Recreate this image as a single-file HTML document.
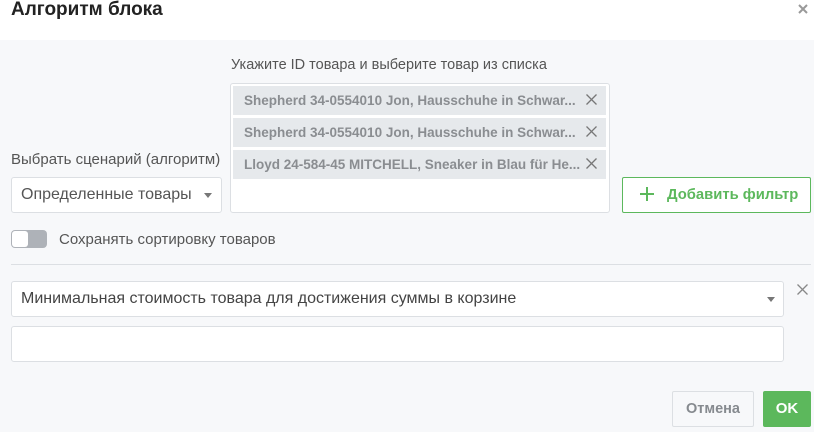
<!DOCTYPE html>
<html><head><meta charset="utf-8"><style>
*{box-sizing:border-box;margin:0;padding:0}
body{width:814px;height:432px;overflow:hidden;background:#f7f8fa;font-family:"Liberation Sans",sans-serif;position:relative;color:#333}
.a{position:absolute;white-space:nowrap}
.hdr{left:0;top:0;width:814px;height:40px;background:#fff}
.box{background:#fff;border:1px solid #dcdfe3;border-radius:3px}
.tag{left:233px;width:373px;height:29px;background:#e6e9ec;color:#8a8d91;font-weight:bold;font-size:13.5px;line-height:29px;padding-left:11px}
.tag svg{position:absolute;right:9px;top:8px}
.caret{width:0;height:0;border-left:4px solid transparent;border-right:4px solid transparent;border-top:5px solid #777}
</style></head><body>
<div class="a hdr"></div>
<div class="a" style="left:11px;top:0;font-size:19px;font-weight:bold;color:#222;line-height:19px">Алгоритм блока</div>
<svg class="a" style="left:798px;top:4px" width="10" height="10"><path d="M1 1L9 9M9 1L1 9" stroke="#999" stroke-width="2"/></svg>

<div class="a" style="left:231px;top:57px;font-size:14.5px;color:#555">Укажите ID товара и выберите товар из списка</div>
<div class="a box" style="left:230px;top:83px;width:380px;height:130px"></div>
<div class="a tag" style="top:86px">Shepherd 34-0554010 Jon, Hausschuhe in Schwar...<svg width="11" height="11"><path d="M0.5 0.5L10.5 10.5M10.5 0.5L0.5 10.5" stroke="#777" stroke-width="1.3"/></svg></div>
<div class="a tag" style="top:118px">Shepherd 34-0554010 Jon, Hausschuhe in Schwar...<svg width="11" height="11"><path d="M0.5 0.5L10.5 10.5M10.5 0.5L0.5 10.5" stroke="#777" stroke-width="1.3"/></svg></div>
<div class="a tag" style="top:150px">Lloyd 24-584-45 MITCHELL, Sneaker in Blau für He...<svg width="11" height="11"><path d="M0.5 0.5L10.5 10.5M10.5 0.5L0.5 10.5" stroke="#777" stroke-width="1.3"/></svg></div>

<div class="a" style="left:11px;top:151px;font-size:15px;color:#555">Выбрать сценарий (алгоритм)</div>
<div class="a box" style="left:11px;top:177px;width:211px;height:36px;font-size:16px;color:#555;line-height:34px;padding-left:9px">Определенные товары</div>
<div class="a caret" style="left:204px;top:193px"></div>

<div class="a" style="left:622px;top:177px;width:189px;height:36px;border:1px solid #5cb85c;border-radius:2px;background:#fff;color:#5cb85c;font-weight:bold;font-size:14.8px;line-height:34px;padding-left:44px">Добавить фильтр</div>
<div class="a" style="left:640px;top:193px;width:14px;height:2px;background:#5cb85c"></div>
<div class="a" style="left:646px;top:187px;width:2px;height:14px;background:#5cb85c"></div>

<div class="a" style="left:11px;top:230px;width:36px;height:18px;border-radius:4px;background:#aeb2b8"></div>
<div class="a" style="left:12px;top:231px;width:16px;height:16px;border-radius:3px;background:#fff"></div>
<div class="a" style="left:59px;top:231px;font-size:15px;color:#555">Сохранять сортировку товаров</div>

<div class="a" style="left:11px;top:264px;width:800px;height:1px;background:#dcdfe3"></div>

<div class="a box" style="left:11px;top:281px;width:773px;height:36px;font-size:16px;color:#444;line-height:34px;padding-left:9px">Минимальная стоимость товара для достижения суммы в корзине</div>
<div class="a caret" style="left:767px;top:297px"></div>
<svg class="a" style="left:797px;top:284px" width="11" height="11"><path d="M0.5 0.5L10.5 10.5M10.5 0.5L0.5 10.5" stroke="#888" stroke-width="1.3"/></svg>
<div class="a box" style="left:11px;top:326px;width:773px;height:36px"></div>

<div class="a" style="left:672px;top:391px;width:82px;height:36px;border:1px solid #dcdfe3;border-radius:2px;background:#f7f8fa;color:#868a8f;font-weight:bold;font-size:14.5px;line-height:34px;text-align:center">Отмена</div>
<div class="a" style="left:763px;top:391px;width:48px;height:36px;border-radius:2px;background:#5cb85c;color:#fff;font-weight:bold;font-size:15px;line-height:36px;text-align:center">OK</div>
</body></html>
